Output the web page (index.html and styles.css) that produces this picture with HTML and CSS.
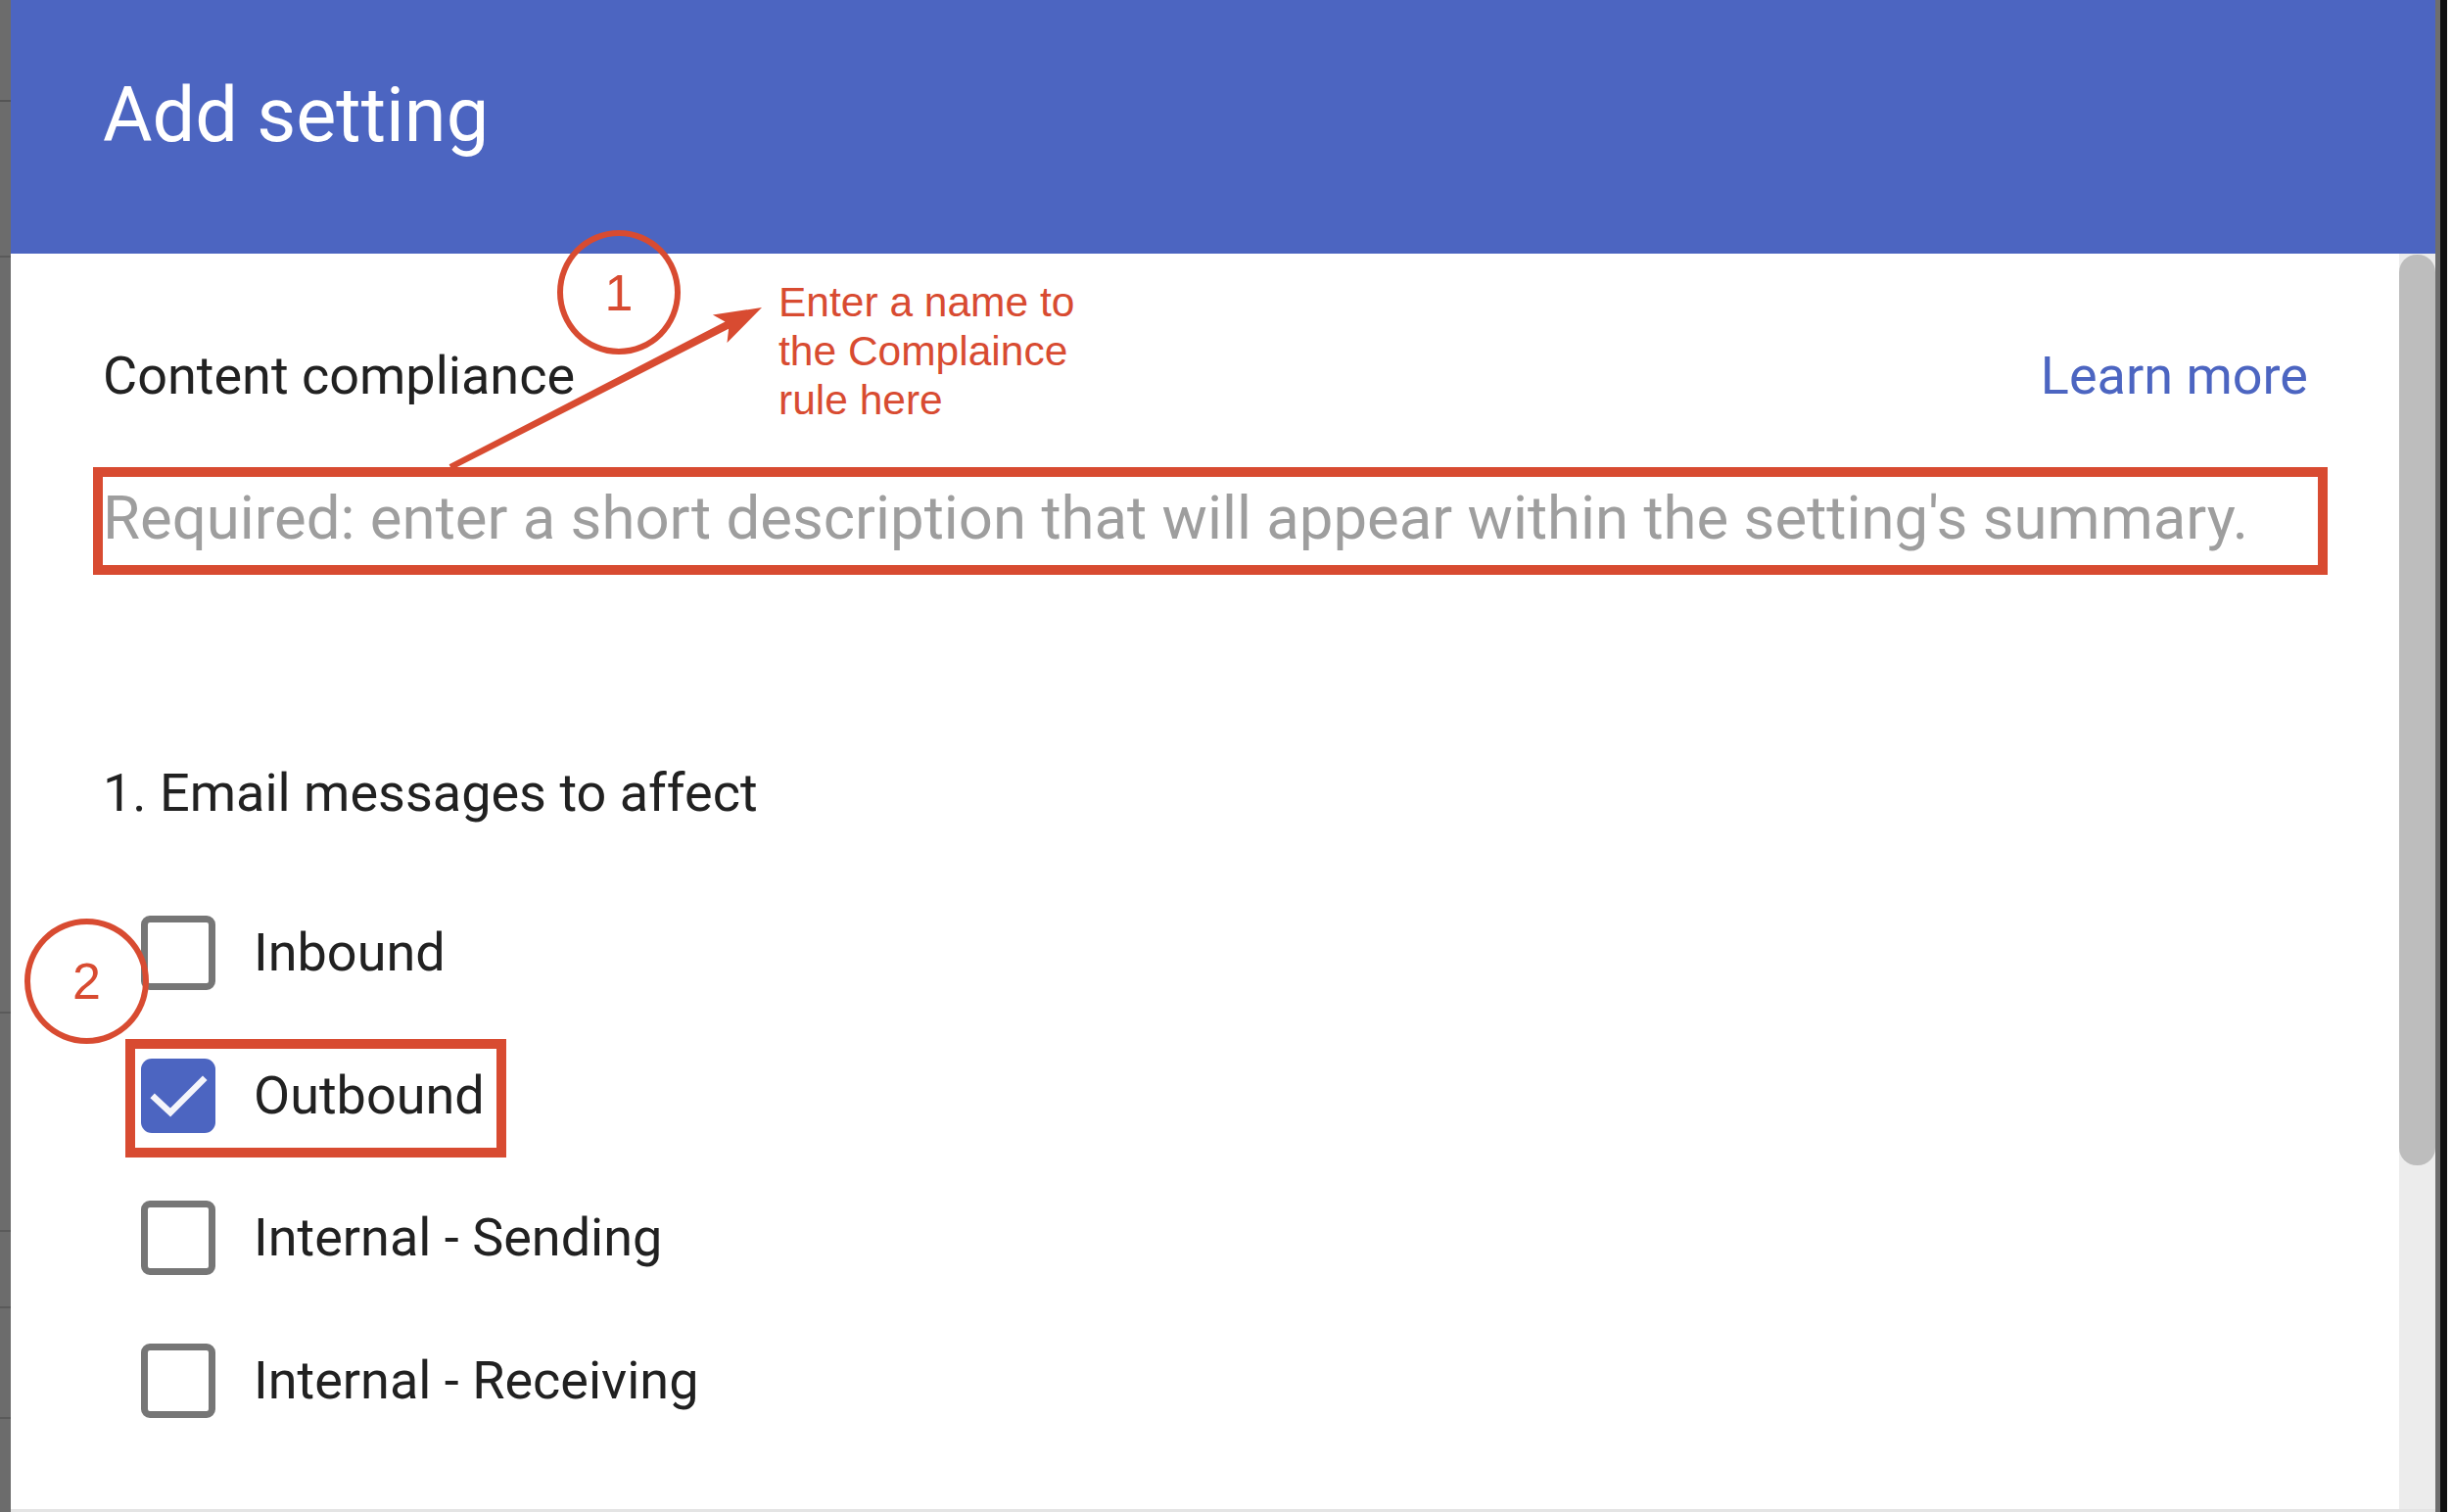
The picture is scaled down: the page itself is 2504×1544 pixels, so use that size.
FILE: index.html
```html
<!DOCTYPE html>
<html lang="en">
<head>
<meta charset="utf-8">
<title>Add setting</title>
<link rel="stylesheet" href="styles.css">
</head>
<body>
<div class="screen">
  <div class="edge-left"></div>
  <div class="dialog">
    <header class="dialog-header">
      <h1 class="dialog-title">Add setting</h1>
    </header>
    <div class="dialog-body">
      <div class="content">
        <div class="setting-row">
          <span class="setting-name">Content compliance</span>
          <a class="learn-more">Learn more</a>
        </div>
        <div class="desc-input">Required: enter a short description that will appear within the setting's summary.</div>
        <h2 class="section-title">1. Email messages to affect</h2>
        <ul class="options">
          <li class="option"><span class="checkbox"></span><span class="option-label">Inbound</span></li>
          <li class="option"><span class="checkbox checked"><svg class="check" viewBox="0 0 76 76"><polyline points="14,40 30,55 63,22"/></svg></span><span class="option-label">Outbound</span></li>
          <li class="option"><span class="checkbox"></span><span class="option-label">Internal - Sending</span></li>
          <li class="option"><span class="checkbox"></span><span class="option-label">Internal - Receiving</span></li>
        </ul>
      </div>
      <div class="scrollbar"><div class="thumb"></div></div>
    </div>
  </div>
  <div class="edge-right"></div>

  <div class="anno-circle c1">1</div>
  <div class="anno-circle c2">2</div>
  <div class="anno-box outbound-box"></div>
  <p class="anno-note">Enter a name to<br>the Complaince<br>rule here</p>
  <svg class="anno-arrow" viewBox="0 0 2504 1544">
    <polygon points="458.6,474.3 740.5,328.6 727.9,321.5 778,314 742.5,350.1 744.1,335.8 461.4,479.7"/>
  </svg>
</div>
</body>
</html>
```
FILE: styles.css
```css
* { box-sizing: border-box; }

html, body {
  margin: 0;
  padding: 0;
  background: #ffffff;
}

.screen {
  position: relative;
  width: 2504px;
  height: 1544px;
  display: flex;
  overflow: hidden;
  font-family: Roboto, "Liberation Sans", Arial, sans-serif;
}

.edge-left {
  width: 11px;
  flex: none;
  background:
    linear-gradient(to bottom,
      #6c6c6c 0, #6c6c6c 102px, #555 102px, #555 104px,
      #6c6c6c 104px, #6c6c6c 261px, #5a5a5a 261px, #5a5a5a 263px,
      #6c6c6c 263px, #6c6c6c 1033px, #5a5a5a 1033px, #5a5a5a 1035px,
      #6c6c6c 1035px, #6c6c6c 1256px, #5a5a5a 1256px, #5a5a5a 1258px,
      #6c6c6c 1258px, #6c6c6c 1334px, #5a5a5a 1334px, #5a5a5a 1336px,
      #6c6c6c 1336px, #6c6c6c 1447px, #5a5a5a 1447px, #5a5a5a 1449px,
      #6c6c6c 1449px);
}

.edge-right {
  width: 17px;
  flex: none;
  background: linear-gradient(to right, #6e6e6e 0, #6e6e6e 5px, #111 5px, #111 12px, #fff 12px);
}

.dialog {
  flex: 1;
  display: flex;
  flex-direction: column;
  min-width: 0;
}

.dialog-header {
  height: 259px;
  flex: none;
  background: #4c65c1;
  padding: 79px 0 0 94px;
}

.dialog-title {
  margin: 0;
  font-size: 77.5px;
  line-height: 78px;
  font-weight: 400;
  color: #ffffff;
}

.dialog-body {
  flex: 1;
  display: flex;
  border-bottom: 3px solid #e4e4e4;
  min-height: 0;
}

.content {
  flex: 1;
  padding: 98px 93px 0 94px;
  color: #212121;
}

.setting-row {
  display: flex;
  justify-content: space-between;
  align-items: flex-start;
  font-size: 54px;
  line-height: 54px;
}

.learn-more {
  color: #4c65c1;
  text-decoration: none;
}

.desc-input {
  margin: 66px -20px 0 -10px;
  border: 10px solid #d84b31;
  height: 110px;
  font-size: 61.7px;
  line-height: 84px;
  padding: 0 0 6px 0;
  color: #9e9e9e;
  white-space: nowrap;
}

.section-title {
  margin: 196px 0 0 0;
  font-size: 54px;
  line-height: 54px;
  font-weight: 400;
}

.options {
  list-style: none;
  margin: 98px 0 0 39px;
  padding: 0;
  display: flex;
  flex-direction: column;
  gap: 69.5px;
}

.option {
  display: flex;
  align-items: center;
  gap: 39px;
  height: 76px;
  font-size: 54px;
  line-height: 54px;
}

.checkbox {
  width: 76px;
  height: 76px;
  flex: none;
  border: 7px solid #767676;
  border-radius: 9px;
  background: #fff;
}

.checkbox.checked {
  border: none;
  background: #4c65c1;
  border-radius: 11px;
}

.check {
  display: block;
  width: 76px;
  height: 76px;
}

.check polyline {
  fill: none;
  stroke: #f4f5fb;
  stroke-width: 6.5;
  stroke-linecap: square;
  stroke-linejoin: miter;
}

.scrollbar {
  width: 37px;
  flex: none;
  padding-top: 1px;
  background: #ececec;
}

.thumb {
  height: 930px;
  background: #bdbdbd;
  border-radius: 18px;
}

/* annotations */
.anno-circle {
  position: absolute;
  border: 6.5px solid #d84b31;
  border-radius: 50%;
  display: flex;
  align-items: center;
  justify-content: center;
  color: #d84b31;
  font-family: "Liberation Sans", Arial, sans-serif;
  font-size: 52px;
  line-height: 1;
}

.c1 { left: 569px; top: 235px; width: 126px; height: 127px; }
.c2 { left: 25px; top: 938px; width: 127px; height: 128px; }

.anno-box {
  position: absolute;
  border: 10px solid #d84b31;
}

.outbound-box { left: 128px; top: 1061px; width: 389px; height: 121px; }

.anno-note {
  position: absolute;
  left: 795px;
  top: 284px;
  margin: 0;
  font-family: "Liberation Sans", Arial, sans-serif;
  font-size: 42.5px;
  line-height: 50px;
  color: #d84b31;
}

.anno-arrow {
  position: absolute;
  left: 0;
  top: 0;
  width: 2504px;
  height: 1544px;
  pointer-events: none;
}

.anno-arrow polygon {
  fill: #d84b31;
}
```
